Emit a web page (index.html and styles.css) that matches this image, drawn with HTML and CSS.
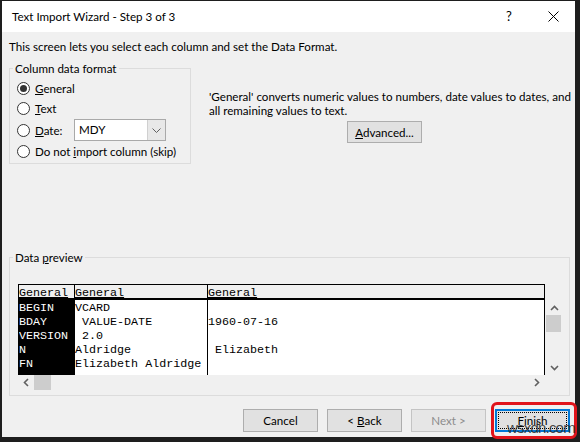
FILE: index.html
```html
<!DOCTYPE html>
<html lang="en">
<head>
<meta charset="utf-8">
<title>Text Import Wizard - Step 3 of 3</title>
<link rel="stylesheet" href="styles.css">
</head>
<body>
  <div class="window">
    <div class="titlebar">
      <span class="title">Text Import Wizard - Step 3 of 3</span>
      <span class="tb-btn help">?</span>
      <span class="tb-btn close">
        <svg width="11" height="11" viewBox="0 0 11 11"><path d="M0.5 0.5 L10.5 10.5 M10.5 0.5 L0.5 10.5" stroke="#000" stroke-width="1" fill="none"/></svg>
      </span>
    </div>

    <div class="content">
      <p class="intro">This screen lets you select each column and set the Data Format.</p>

      <div class="top-row">
        <fieldset class="group format">
          <legend>Column data format</legend>
          <div class="opt row-general"><span class="radio on"></span><span><u>G</u>eneral</span></div>
          <div class="opt row-text"><span class="radio"></span><span><u>T</u>ext</span></div>
          <div class="opt row-date">
            <span class="radio"></span><span class="date-label"><u>D</u>ate:</span>
            <span class="combo"><span class="combo-value">MDY</span><span class="combo-btn"><svg width="9" height="5" viewBox="0 0 9 5"><path d="M0.5 0.5 L4.5 4.5 L8.5 0.5" stroke="#606060" stroke-width="1" fill="none"/></svg></span></span>
          </div>
          <div class="opt row-skip"><span class="radio"></span><span>Do not <u>i</u>mport column (skip)</span></div>
        </fieldset>

        <div class="explain">
          <p>'General' converts numeric values to numbers, date values to dates, and<br>all remaining values to text.</p>
          <button class="btn advanced" type="button"><u>A</u>dvanced...</button>
        </div>
      </div>

      <fieldset class="group preview">
        <legend>Data <u>p</u>review</legend>
        <div class="pv">
          <div class="pv-head">
            <span class="c1"><u>General</u></span><span class="c2"><u>General</u></span><span class="c3"><u>General</u></span>
          </div>
          <div class="pv-body">
            <div class="pv-row"><span class="c1">BEGIN</span><span class="c2">VCARD</span><span class="c3"></span></div>
            <div class="pv-row"><span class="c1">BDAY</span><span class="c2"> VALUE-DATE</span><span class="c3">1960-07-16</span></div>
            <div class="pv-row"><span class="c1">VERSION</span><span class="c2"> 2.0</span><span class="c3"></span></div>
            <div class="pv-row"><span class="c1">N</span><span class="c2">Aldridge</span><span class="c3"> Elizabeth</span></div>
            <div class="pv-row"><span class="c1">FN</span><span class="c2">Elizabeth Aldridge</span><span class="c3"></span></div>
            <div class="pv-row"><span class="c1"></span><span class="c2"></span><span class="c3"></span></div>
          </div>
          <div class="vscroll">
            <span class="sb-btn"><svg width="9" height="6" viewBox="0 0 9 6"><path d="M1 5 L4.5 1.5 L8 5" stroke="#606060" stroke-width="1.6" fill="none"/></svg></span>
            <span class="v-thumb"></span>
            <span class="sb-fill"></span>
            <span class="sb-btn"><svg width="9" height="6" viewBox="0 0 9 6"><path d="M1 1 L4.5 4.5 L8 1" stroke="#606060" stroke-width="1.6" fill="none"/></svg></span>
          </div>
          <div class="hscroll">
            <span class="sb-btn"><svg width="6" height="9" viewBox="0 0 6 9"><path d="M5 1 L1.5 4.5 L5 8" stroke="#606060" stroke-width="1.6" fill="none"/></svg></span>
            <span class="h-thumb"></span>
            <span class="sb-fill"></span>
            <span class="sb-btn"><svg width="6" height="9" viewBox="0 0 6 9"><path d="M1 1 L4.5 4.5 L1 8" stroke="#606060" stroke-width="1.6" fill="none"/></svg></span>
          </div>
        </div>
      </fieldset>

      <div class="buttons">
        <button class="btn" type="button">Cancel</button>
        <button class="btn" type="button">&lt; <u>B</u>ack</button>
        <button class="btn" type="button" disabled>Next &gt;</button>
        <button class="btn default" type="button"><span class="focus"><u>F</u>inish</span></button>
      </div>
    </div>
  </div>

  <div class="callout"></div>
  <div class="watermark">wsxdn.com</div>
</body>
</html>
```

FILE: styles.css
```css
* {
  box-sizing: border-box;
}

html,
body {
  margin: 0;
}

body {
  position: relative;
  width: 580px;
  height: 442px;
  padding: 1px 5px 5px 2px;
  overflow: hidden;
  background: #1e1e1e;
  font-family: "Lato", "Segoe UI", sans-serif;
  font-size: 11.6px;
  line-height: 15px;
  color: #000;
}

u {
  text-decoration: underline;
  text-underline-offset: 1px;
}

/* dialog frame */
.window {
  width: 573px;
  height: 436px;
  display: flex;
  flex-direction: column;
  background: #f0f0f0;
}

.titlebar {
  height: 31px;
  flex: none;
  display: flex;
  align-items: center;
  padding-left: 10px;
  background: #fff;
}

.title {
  flex: 1;
}

.tb-btn {
  width: 44px;
  height: 31px;
  display: flex;
  align-items: center;
  justify-content: center;
}

.help {
  font-size: 13px;
}

.content {
  flex: 1;
  display: flex;
  flex-direction: column;
  padding: 7px 5px 5px 7px;
}

.intro {
  margin: 0;
  height: 15px;
}

/* group boxes */
.group {
  margin: 0;
  border: 1px solid #dcdcdc;
  min-width: 0;
}

.group legend {
  padding: 0 2px;
  line-height: 15px;
}

.top-row {
  margin-top: 7px;
  display: flex;
  height: 103px;
}

.format {
  flex: none;
  width: 182px;
  height: 103px;
  padding: 3px 4px 0 7px;
  display: flex;
  flex-direction: column;
}

.format legend {
  margin-left: -4px;
}

.opt {
  display: flex;
  align-items: center;
  white-space: nowrap;
}

.row-general { height: 18px; }
.row-text { height: 22px; }
.row-date { height: 22px; }
.row-skip { height: 20px; }

.radio {
  width: 13px;
  height: 13px;
  flex: none;
  margin-right: 5px;
  border: 1px solid #333;
  border-radius: 50%;
  background: #fff;
  display: flex;
  align-items: center;
  justify-content: center;
}

.radio.on::after {
  content: "";
  width: 7px;
  height: 7px;
  border-radius: 50%;
  background: #333;
}

.date-label {
  width: 39px;
}

.combo {
  width: 92px;
  height: 22px;
  display: flex;
  border: 1px solid #a9a9a9;
  background: #fff;
}

.combo-value {
  flex: 1;
  padding-left: 4px;
  line-height: 20px;
}

.combo-btn {
  width: 18px;
  display: flex;
  align-items: center;
  justify-content: center;
  background: #e8e8e8;
  border-left: 1px solid #d0d0d0;
}

.explain {
  margin-left: 18px;
  padding-top: 29px;
  display: flex;
  flex-direction: column;
}

.explain p {
  margin: 0;
  line-height: 14px;
  white-space: nowrap;
}

/* push buttons */
.btn {
  width: 75px;
  height: 23px;
  padding: 0;
  border: 1px solid #adadad;
  background: #e1e1e1;
  font: inherit;
  color: #000;
}

.btn:disabled {
  border-color: #c4c4c4;
  background: #e6e6e6;
  color: #8c8c8c;
}

.advanced {
  margin-top: 3px;
  margin-left: 138px;
  height: 22px;
}

.btn.default {
  border: 2px solid #0078d7;
  padding: 1px;
}

.btn.default .focus {
  display: block;
  height: 100%;
  border: 1px dotted #000;
  line-height: 15px;
}

/* data preview */
.preview {
  margin-top: 86px;
  height: 146px;
  padding: 19px 7px 5px 8px;
}

.preview legend {
  margin-left: -5px;
}

.pv {
  display: grid;
  grid-template-columns: 527px 17px;
  grid-template-rows: 16px 75px 15px;
}

.pv-head,
.pv-row {
  display: grid;
  grid-template-columns: 56px 133px 1fr;
  font-family: "Liberation Mono", "Courier New", monospace;
  font-size: 11.7px;
  white-space: pre;
}

.pv-head {
  grid-column: 1;
  grid-row: 1;
  border: 1px solid #000;
  border-bottom-width: 2px;
  background: #f0f0f0;
  line-height: 13px;
  overflow: hidden;
}

.pv-head span {
  padding-top: 2px;
}

.pv-head u {
  text-underline-offset: 1px;
}

.pv-head .c1,
.pv-head .c2 {
  border-right: 1px solid #000;
}

.pv-body {
  grid-column: 1;
  grid-row: 2;
  overflow: hidden;
  background: #fff;
  border-left: 1px solid #000;
  border-right: 1px solid #000;
}

.pv-row {
  height: 14px;
  line-height: 14px;
}

.pv-row span {
  padding-top: 1px;
}

.pv-row .c1 {
  background: #000;
  color: #fff;
}

.pv-row .c2 {
  border-right: 1px solid #000;
}

.vscroll {
  grid-column: 2;
  grid-row: 2;
  display: flex;
  flex-direction: column;
  padding-left: 1px;
}

.hscroll {
  grid-column: 1;
  grid-row: 3;
  display: flex;
}

.sb-btn {
  width: 16px;
  height: 15px;
  flex: none;
  display: flex;
  align-items: center;
  justify-content: center;
}

.sb-fill {
  flex: 1;
}

.v-thumb {
  height: 17px;
  width: 15px;
  background: #cdcdcd;
}

.h-thumb {
  width: 17px;
  height: 15px;
  background: #cdcdcd;
}

.buttons {
  margin-top: 13px;
  display: flex;
  justify-content: flex-end;
  gap: 9px;
}

/* annotation drawn over the finish button */
.callout {
  position: absolute;
  left: 491px;
  top: 402px;
  width: 86px;
  height: 37px;
  border: 3px solid #e0141b;
  border-radius: 6px;
}

.watermark {
  position: absolute;
  left: 507px;
  top: 419px;
  font-family: "Liberation Sans", sans-serif;
  font-size: 15px;
  line-height: 18px;
  letter-spacing: -0.8px;
  color: rgba(40, 40, 40, 0.85);
}
```
